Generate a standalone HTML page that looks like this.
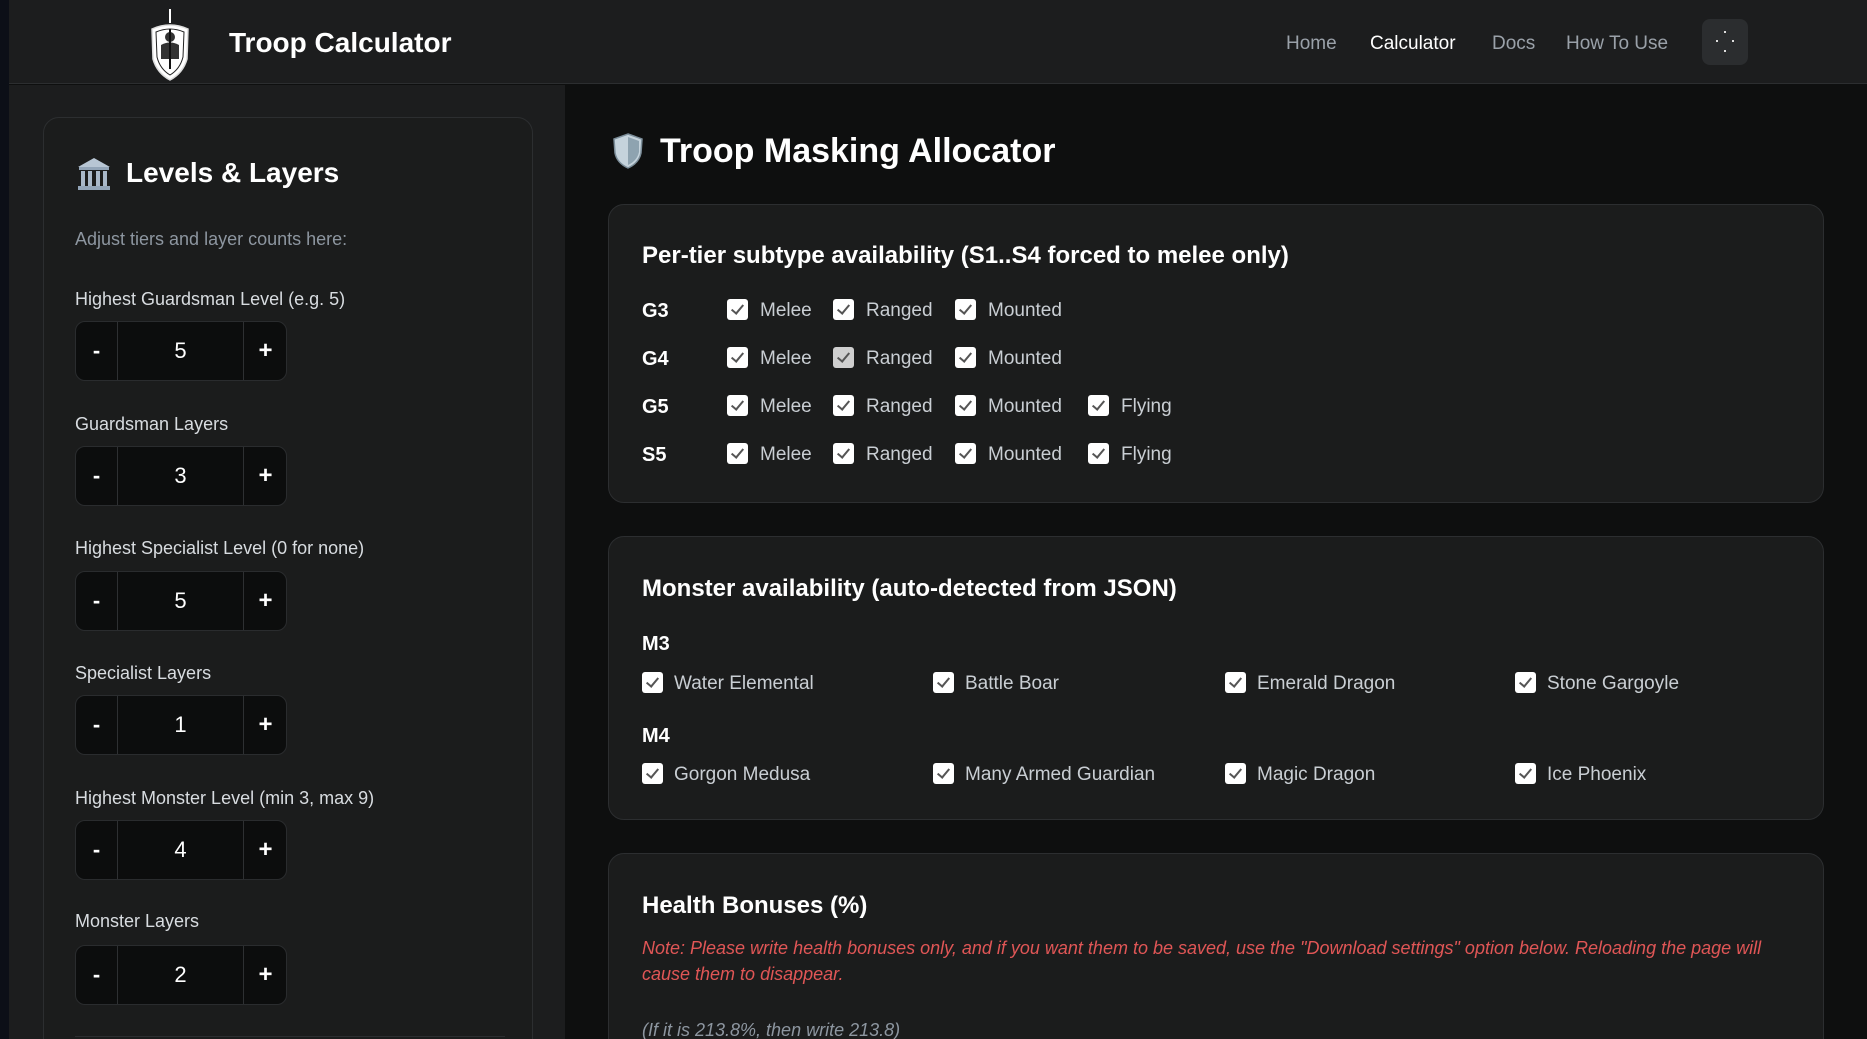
<!DOCTYPE html>
<html><head><meta charset="utf-8"><style>
*{box-sizing:border-box;margin:0;padding:0}
html,body{width:1867px;height:1039px;overflow:hidden}
body{background:#0e0f0f;font-family:"Liberation Sans",sans-serif;color:#e8eaed}
#root{position:relative;width:1867px;height:1039px;overflow:hidden}
.strip{position:absolute;left:0;top:0;width:9px;height:1039px;background:#0c0f17}
.header{position:absolute;left:9px;top:0;right:0;height:84px;background:#1c1d1e;border-bottom:1px solid #2c2e30}
.brand{position:absolute;left:220px;top:27px;font-size:28px;font-weight:bold;color:#fff}
.nav a{position:absolute;top:33px;font-size:19px;color:#9aa1a9;text-decoration:none}
.side{position:absolute;left:9px;top:85px;width:556px;height:954px;background:#1c1d1e}
.card{position:absolute;border:1px solid #2c2e30;border-radius:16px;background:#1b1c1c}
.lbl{position:absolute;left:75px;font-size:18px;color:#d8dce0}
.step{position:absolute;left:75px;width:212px;height:60px;background:#0c0d0d;border:1px solid #2a2c2e;border-radius:10px}
.step span{position:absolute;top:0;height:58px;line-height:58px;text-align:center;color:#fff}
.step .m{left:0;width:42px;border-right:1px solid #2e3032;font-size:22px;font-weight:bold}
.step .v{left:42px;width:125px;font-size:22px}
.step .p{left:167px;width:44px;border-left:1px solid #2e3032;font-size:24px;font-weight:bold}
.h2{position:absolute;font-size:24px;font-weight:bold;color:#fff}
.cb{position:absolute;width:21px;height:21px;background:#fff;border-radius:3px}
.cb:after{content:"";position:absolute;left:7px;top:3px;width:5px;height:10px;border:solid #555;border-width:0 2px 2px 0;transform:rotate(40deg)}
.cb.g{background:#cfcfcf}
.t{position:absolute;font-size:19px;color:#c9ced3}
.rl{position:absolute;left:642px;font-size:20px;font-weight:bold;color:#fff}
</style></head><body><div id="root">
<div class="strip"></div>
<div class="header">
<svg style="position:absolute;left:140px;top:7px" width="42" height="75" viewBox="0 0 42 75"><path d="M21 2 L21 16" stroke="#fff" stroke-width="2"/><path d="M3 22 Q21 14 39 22 L38 52 Q34 66 21 73 Q8 66 4 52 Z" fill="#fff" stroke="#ddd" stroke-width="1.5"/><path d="M7 25 Q21 19 35 25 L34 50 Q31 62 21 68 Q11 62 8 50 Z" fill="none" stroke="#222" stroke-width="1"/><circle cx="21" cy="30" r="5" fill="#333"/><path d="M12 38 Q21 33 30 38 L30 52 L12 52 Z" fill="#333"/><path d="M21 22 L21 62" stroke="#111" stroke-width="2"/></svg>
<div class="brand">Troop Calculator</div>
<div class="nav"><a style="left:1277px">Home</a><a style="left:1361px;color:#fff">Calculator</a><a style="left:1483px">Docs</a><a style="left:1557px">How To Use</a></div>
<div style="position:absolute;left:1693px;top:19px;width:46px;height:46px;background:#2b2d2f;border-radius:8px">
<i style="position:absolute;left:22px;top:12px;width:2px;height:2px;background:#ddd"></i><i style="position:absolute;left:14px;top:21px;width:2px;height:2px;background:#ddd"></i><i style="position:absolute;left:30px;top:21px;width:2px;height:2px;background:#ddd"></i><i style="position:absolute;left:22px;top:31px;width:2px;height:2px;background:#ddd"></i></div>
</div>
<div class="side"></div>
<div class="card" style="left:43px;top:117px;width:490px;height:940px;background:#1b1c1c"></div>
<svg style="position:absolute;left:76px;top:156px" width="36" height="36" viewBox="0 0 36 36"><path d="M2 11 L18 2 L34 11 Z" fill="#b8c6d4"/><rect x="3" y="11" width="30" height="3" fill="#93a5b8"/><rect x="5" y="15" width="4" height="15" fill="#a9b8c8"/><rect x="12" y="15" width="4" height="15" fill="#a9b8c8"/><rect x="20" y="15" width="4" height="15" fill="#a9b8c8"/><rect x="27" y="15" width="4" height="15" fill="#a9b8c8"/><rect x="2" y="30" width="32" height="4" fill="#93a5b8"/></svg>
<div class="h2" style="left:126px;top:157px;font-size:28px">Levels &amp; Layers</div>
<div class="lbl" style="top:229px;color:#8d96a0">Adjust tiers and layer counts here:</div>
<div class="lbl" style="top:289px">Highest Guardsman Level (e.g. 5)</div>
<div class="step" style="top:321px"><span class="m">-</span><span class="v">5</span><span class="p">+</span></div>
<div class="lbl" style="top:414px">Guardsman Layers</div>
<div class="step" style="top:446px"><span class="m">-</span><span class="v">3</span><span class="p">+</span></div>
<div class="lbl" style="top:538px">Highest Specialist Level (0 for none)</div>
<div class="step" style="top:571px"><span class="m">-</span><span class="v">5</span><span class="p">+</span></div>
<div class="lbl" style="top:663px">Specialist Layers</div>
<div class="step" style="top:695px"><span class="m">-</span><span class="v">1</span><span class="p">+</span></div>
<div class="lbl" style="top:788px">Highest Monster Level (min 3, max 9)</div>
<div class="step" style="top:820px"><span class="m">-</span><span class="v">4</span><span class="p">+</span></div>
<div class="lbl" style="top:911px">Monster Layers</div>
<div class="step" style="top:945px"><span class="m">-</span><span class="v">2</span><span class="p">+</span></div>
<div style="position:absolute;left:75px;top:1036px;width:430px;height:1px;background:#2c2e30"></div>

<svg style="position:absolute;left:612px;top:133px" width="32" height="36" viewBox="0 0 32 36"><path d="M16 1 L30 6 L29 20 Q27 30 16 35 Q5 30 3 20 L2 6 Z" fill="#c5d3dc" stroke="#7b8d99" stroke-width="1.5"/><path d="M16 4 L16 32 Q25 28 27 19 L27 8 Z" fill="#8ea3b0"/></svg>
<div class="h2" style="left:660px;top:132px;font-size:34px">Troop Masking Allocator</div>

<div class="card" style="left:608px;top:204px;width:1216px;height:299px"></div>
<div class="h2" style="left:642px;top:242px">Per-tier subtype availability (S1..S4 forced to melee only)</div>
<div class="rl" style="top:300px">G3</div><div class="rl" style="top:348px">G4</div><div class="rl" style="top:396px">G5</div><div class="rl" style="top:444px">S5</div>

<div class="card" style="left:608px;top:536px;width:1216px;height:284px"></div>
<div class="h2" style="left:642px;top:575px">Monster availability (auto-detected from JSON)</div>
<div class="rl" style="top:633px">M3</div><div class="rl" style="top:725px">M4</div>

<div class="card" style="left:608px;top:853px;width:1216px;height:220px"></div>
<div class="h2" style="left:642px;top:892px">Health Bonuses (%)</div>
<div style="position:absolute;left:642px;top:935px;width:1150px;font-size:18px;font-style:italic;color:#e05656;line-height:26px">Note: Please write health bonuses only, and if you want them to be saved, use the "Download settings" option below. Reloading the page will cause them to disappear.</div>
<div style="position:absolute;left:642px;top:1020px;font-size:18px;font-style:italic;color:#8d96a0">(If it is 213.8%, then write 213.8)</div>

<div id="boxes"></div>
</div>
<script>
var h='';
function cb(x,y,g){h+='<div class="cb'+(g?' g':'')+'" style="left:'+x+'px;top:'+y+'px"></div>';}
function t(x,y,s){h+='<div class="t" style="left:'+x+'px;top:'+y+'px">'+s+'</div>';}
var rows=[310,358,406,454],xs=[727,833,955,1088],names=['Melee','Ranged','Mounted','Flying'];
rows.forEach(function(y,r){var n=r<2?3:4;for(var i=0;i<n;i++){cb(xs[i],y-11,r==1&&i==1);t(xs[i]+33,y-10,names[i]);}});
var mx=[642,933,1225,1515],m=[['Water Elemental','Battle Boar','Emerald Dragon','Stone Gargoyle'],['Gorgon Medusa','Many Armed Guardian','Magic Dragon','Ice Phoenix']];
[683,774].forEach(function(y,r){for(var i=0;i<4;i++){cb(mx[i],y-11,false);t(mx[i]+32,y-10,m[r][i]);}});
document.getElementById('boxes').innerHTML=h;
</script>
</body></html>
